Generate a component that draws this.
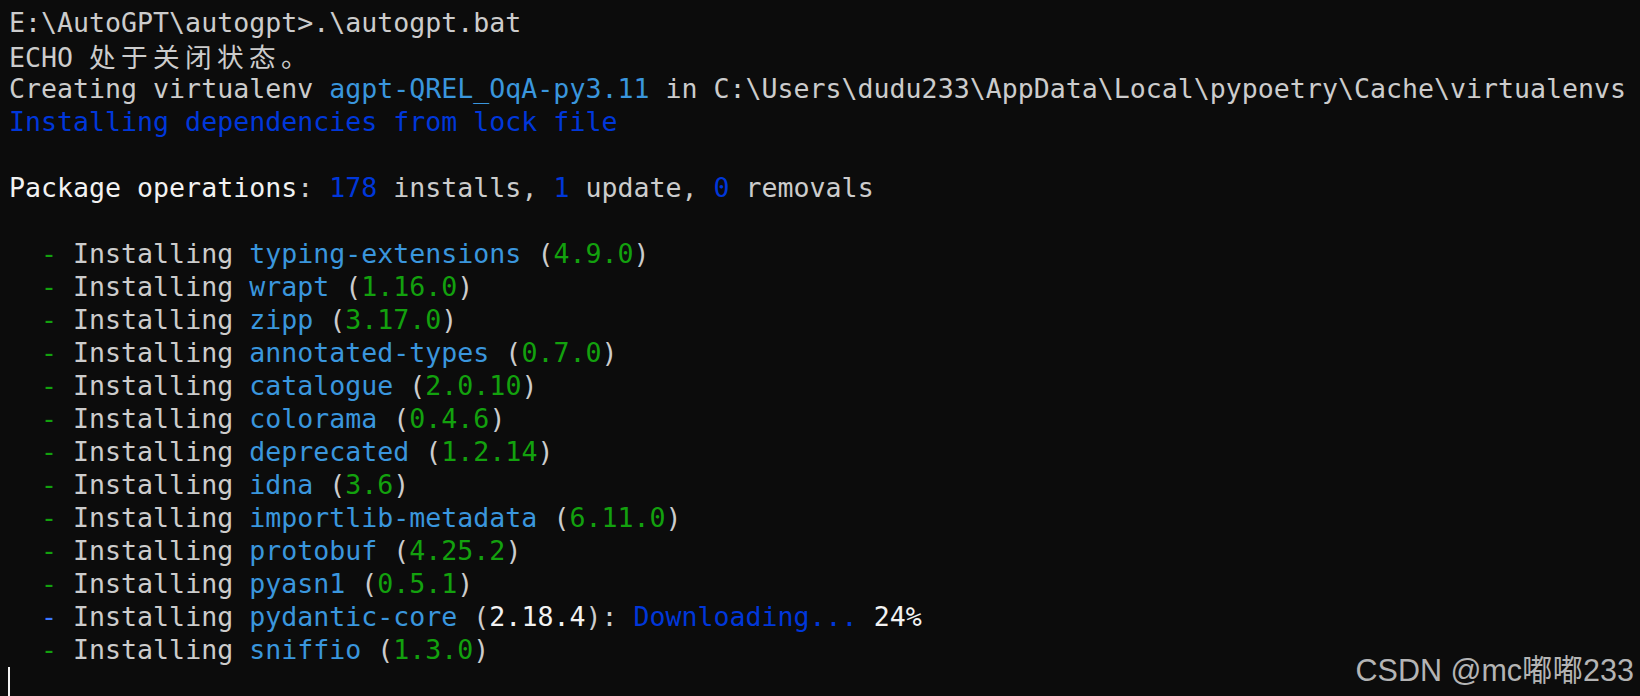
const C = {
  fg: "text-[#cccccc]",
  white: "text-[#f2f2f2]",
  cyan: "text-[#3a96dd]",
  blue: "text-[#0037da]",
  green: "text-[#13a10e]",
  bblue: "text-[#3b78ff]",
};

type Seg = [string, string];

const installs: [string, string][] = [
  ["typing-extensions", "4.9.0"],
  ["wrapt", "1.16.0"],
  ["zipp", "3.17.0"],
  ["annotated-types", "0.7.0"],
  ["catalogue", "2.0.10"],
  ["colorama", "0.4.6"],
  ["deprecated", "1.2.14"],
  ["idna", "3.6"],
  ["importlib-metadata", "6.11.0"],
  ["protobuf", "4.25.2"],
  ["pyasn1", "0.5.1"],
];

const installLine = (name: string, ver: string): Seg[] => [
  [C.fg, "  "],
  [C.green, "-"],
  [C.fg, " Installing "],
  [C.cyan, name],
  [C.fg, " ("],
  [C.green, ver],
  [C.fg, ")"],
];

const lines: Seg[][] = [
  [[C.fg, "E:\\AutoGPT\\autogpt>.\\autogpt.bat"]],
  [[C.fg, "ECHO "], ["cjk", "处于关闭状态。"]],
  [
    [C.fg, "Creating virtualenv "],
    [C.cyan, "agpt-QREL_OqA-py3.11"],
    [C.fg, " in C:\\Users\\dudu233\\AppData\\Local\\pypoetry\\Cache\\virtualenvs"],
  ],
  [[C.blue, "Installing dependencies from lock file"]],
  [],
  [
    [C.white, "Package operations"],
    [C.fg, ": "],
    [C.blue, "178"],
    [C.fg, " installs, "],
    [C.blue, "1"],
    [C.fg, " update, "],
    [C.blue, "0"],
    [C.fg, " removals"],
  ],
  [],
  ...installs.map(([n, v]) => installLine(n, v)),
  [
    [C.fg, "  "],
    [C.bblue, "-"],
    [C.fg, " Installing "],
    [C.cyan, "pydantic-core"],
    [C.fg, " ("],
    [C.white, "2.18.4"],
    [C.fg, "): "],
    [C.blue, "Downloading..."],
    [C.fg, " "],
    [C.white, "24%"],
  ],
  installLine("sniffio", "1.3.0"),
];

export default function App() {
  return (
    <div className="relative h-[696px] w-[1640px] overflow-hidden bg-[#0c0c0c] pl-[9px] pt-[5.5px] font-['DejaVu_Sans_Mono','Noto_Sans_CJK_SC',monospace] text-[26.6px] leading-[33px]">
      {lines.map((segs, i) => (
        <div key={i} className="h-[33px] whitespace-pre">
          {segs.map(([cls, text], j) =>
            cls === "cjk" ? (
              <span key={j} className="font-['Noto_Sans_CJK_SC',sans-serif] tracking-[5.4px] text-[#cccccc]">
                {text}
              </span>
            ) : (
              <span key={j} className={cls}>
                {text}
              </span>
            )
          )}
        </div>
      ))}
      {/* cursor */}
      <div className="h-[33px]">
        <div className="mt-[1px] ml-[-1px] h-[32px] w-[1.5px] bg-[#f2f2f2]" />
      </div>

      {/* watermark */}
      <div className="absolute right-[6px] bottom-[10px] font-['Liberation_Sans','Noto_Sans_CJK_SC',sans-serif] text-[30.5px] leading-[32px] text-[#b4b4b4]">
        CSDN @mc嘟嘟233
      </div>
    </div>
  );
}
